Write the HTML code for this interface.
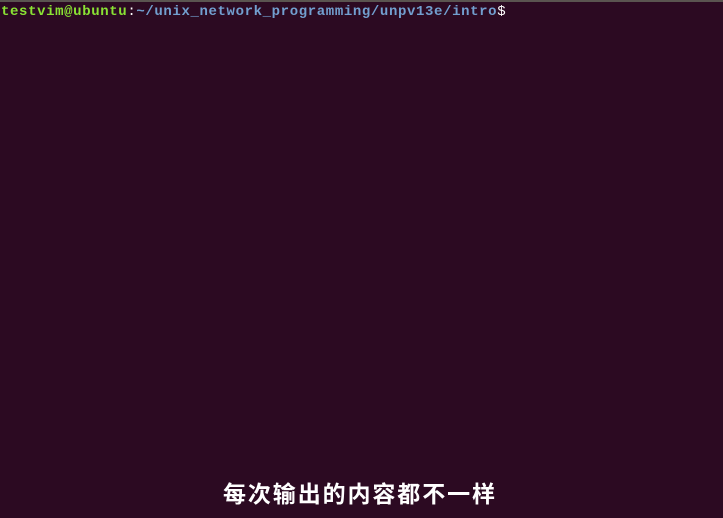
<!DOCTYPE html>
<html><head><meta charset="utf-8"><style>
html,body{margin:0;padding:0;}
body{width:723px;height:518px;background:#2c0a22;position:relative;overflow:hidden;}
.bar{position:absolute;left:0;top:0;width:723px;height:2px;background:#5a5450;}
.line{position:absolute;left:1px;top:3px;font-family:"Liberation Mono",monospace;font-size:14px;letter-spacing:0.62px;font-weight:bold;line-height:18px;white-space:pre;color:#fff;}
.g{color:#8ae234}.b{color:#729fcf}.w{color:#fff;font-weight:normal}
.sub{position:absolute;left:223px;top:478px;font-family:"Liberation Sans","Noto Sans CJK SC",sans-serif;font-size:23px;font-weight:bold;letter-spacing:1.9px;color:#fff;line-height:32px;white-space:nowrap;}
</style></head><body>
<div class="bar"></div>
<div class="line"><span class="g">testvim@ubuntu</span><span class="w">:</span><span class="b">~/unix_network_programming/unpv13e/intro</span><span class="w">$</span></div>
<div class="sub">每次输出的内容都不一样</div>
</body></html>
